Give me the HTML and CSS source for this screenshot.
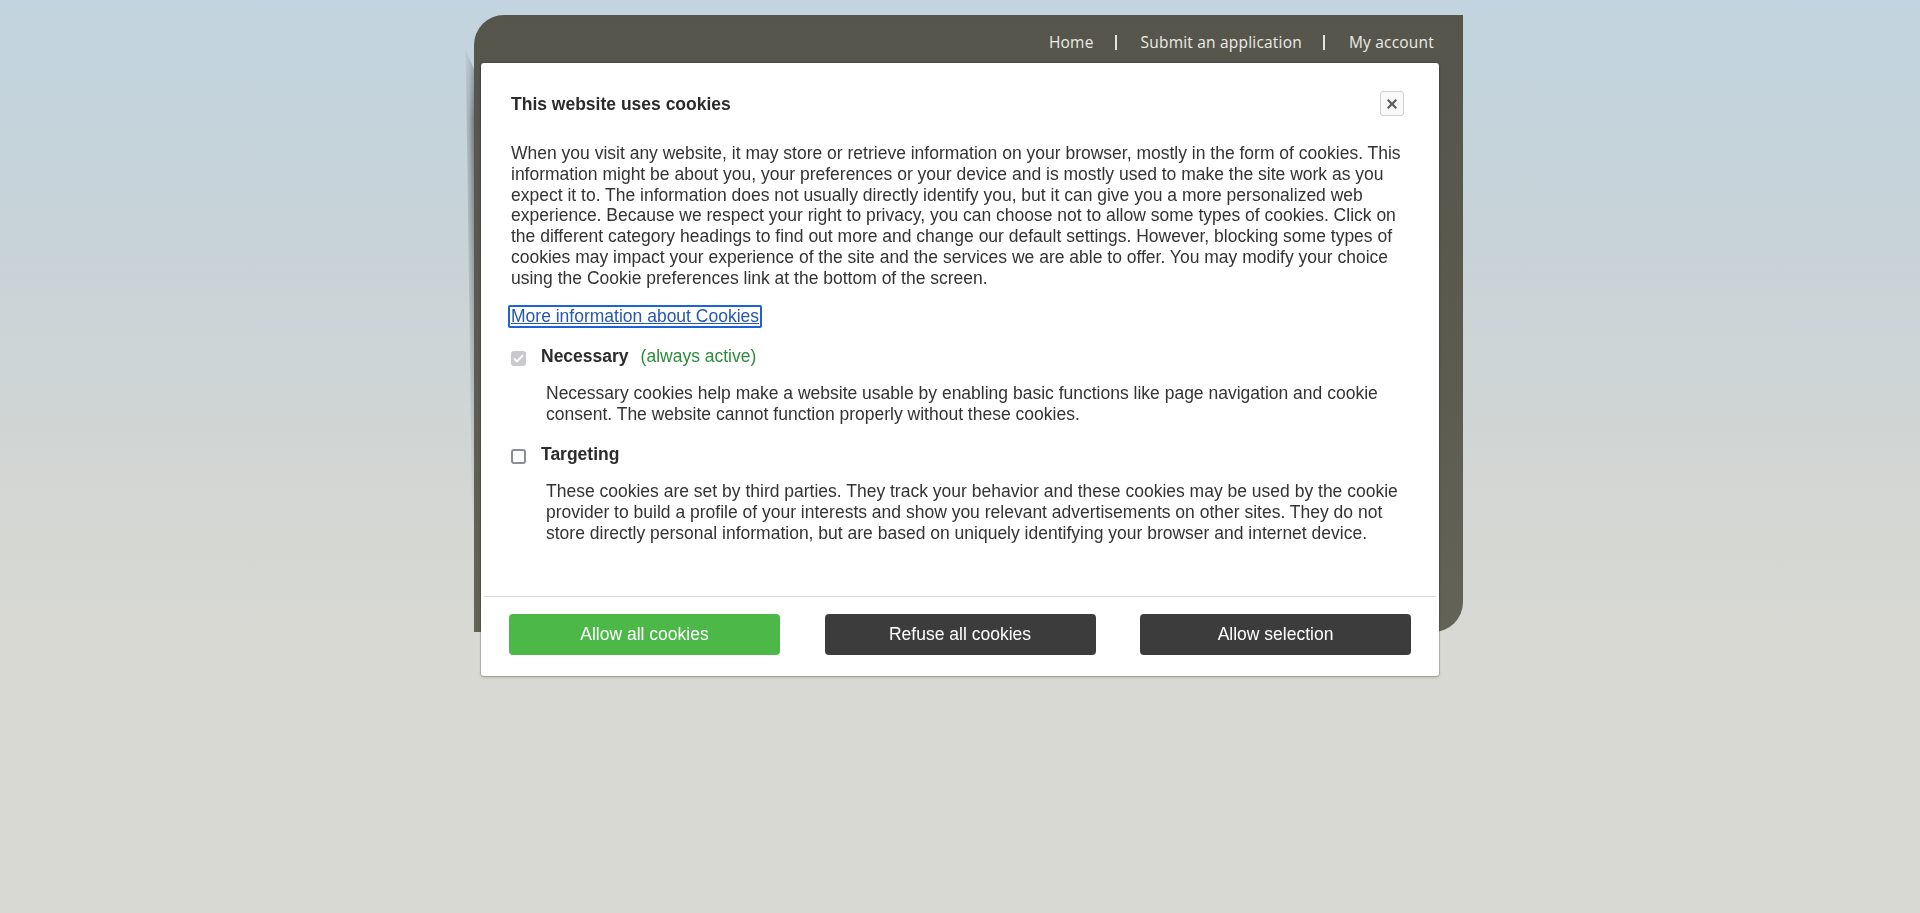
FILE: index.html
```html
<!DOCTYPE html>
<html lang="en">
<head>
<meta charset="utf-8">
<title>Cookies</title>
<link rel="stylesheet" href="styles.css">
</head>
<body>
<div class="page">
  <div class="panel">
    <div class="curl"></div>
    <nav class="topnav">
      <a href="#">Home</a><span class="sep"></span><a href="#">Submit an application</a><span class="sep"></span><a href="#">My account</a>
    </nav>
  </div>
</div>

<div class="modal">
  <div class="modal-body">
    <div class="modal-head">
      <h2 class="title">This website uses cookies</h2>
      <button class="close" type="button" aria-label="Close">
        <svg width="10" height="10" viewBox="0 0 10 10"><path d="M1.6 0 L5 3.4 L8.4 0 L10 1.6 L6.6 5 L10 8.4 L8.4 10 L5 6.6 L1.6 10 L0 8.4 L3.4 5 L0 1.6 Z" fill="#5e5e5e"/></svg>
      </button>
    </div>
    <p class="intro">When you visit any website, it may store or retrieve information on your browser, mostly in the form of cookies. This information might be about you, your preferences or your device and is mostly used to make the site work as you expect it to. The information does not usually directly identify you, but it can give you a more personalized web experience. Because we respect your right to privacy, you can choose not to allow some types of cookies. Click on the different category headings to find out more and change our default settings. However, blocking some types of cookies may impact your experience of the site and the services we are able to offer. You may modify your choice using the Cookie preferences link at the bottom of the screen.</p>
    <a class="more" href="#">More information about Cookies</a>

    <div class="cat cat-first">
      <span class="cb cb-disabled"><svg width="11" height="9" viewBox="0 0 11 9"><path d="M1 4.6 L4 7.4 L10 1.2" fill="none" stroke="#fff" stroke-width="2"/></svg></span>
      <span class="cat-name">Necessary</span>
      <span class="always">(always active)</span>
    </div>
    <p class="cat-desc">Necessary cookies help make a website usable by enabling basic functions like page navigation and cookie consent. The website cannot function properly without these cookies.</p>

    <div class="cat cat-second">
      <span class="cb cb-empty"></span>
      <span class="cat-name">Targeting</span>
    </div>
    <p class="cat-desc">These cookies are set by third parties. They track your behavior and these cookies may be used by the cookie provider to build a profile of your interests and show you relevant advertisements on other sites. They do not store directly personal information, but are based on uniquely identifying your browser and internet device.</p>
  </div>
  <div class="modal-foot">
    <button class="btn btn-green" type="button">Allow all cookies</button>
    <button class="btn btn-dark" type="button">Refuse all cookies</button>
    <button class="btn btn-dark" type="button">Allow selection</button>
  </div>
</div>
</body>
</html>
```

FILE: styles.css
```css
html, body {
  margin: 0;
  padding: 0;
}
body {
  height: 913px;
  overflow: hidden;
  background: linear-gradient(180deg, #c2d4df 0px, #c8d3d8 250px, #d3d6d3 480px, #d8d9d3 640px, #d8d9d3 100%);
  font-family: "Liberation Sans", Arial, sans-serif;
}

.page {
  padding-top: 15px;
  padding-left: 474px;
}

.panel {
  position: relative;
  width: 989px;
  height: 617px;
  background: linear-gradient(180deg, #55554b 0%, #5a5a4f 50%, #636357 100%);
  border-radius: 30px 0 30px 0;
}

.curl {
  position: absolute;
  left: -12px;
  top: 35px;
  width: 12px;
  height: 480px;
  background: linear-gradient(90deg, rgba(120,130,130,0) 0%, rgba(100,108,106,0.35) 60%, rgba(80,86,84,0.7) 100%);
  clip-path: polygon(30% 0, 100% 4%, 100% 100%, 85% 100%, 45% 25%);
  -webkit-mask-image: linear-gradient(180deg, rgba(0,0,0,0.4) 0%, #000 15%, rgba(0,0,0,0.5) 55%, rgba(0,0,0,0) 100%);
  mask-image: linear-gradient(180deg, rgba(0,0,0,0.4) 0%, #000 15%, rgba(0,0,0,0.5) 55%, rgba(0,0,0,0) 100%);
}

.topnav {
  display: flex;
  justify-content: flex-end;
  align-items: center;
  padding: 17px 29px 0 0;
  font-family: "Open Sans", sans-serif;
  font-size: 15.5px;
  line-height: 20px;
  letter-spacing: 0.2px;
}
.topnav a {
  color: #ecece6;
  text-decoration: none;
}
.topnav .sep {
  display: block;
  width: 2px;
  height: 15px;
  background: #e4e4de;
  margin: 0 24px 0 21px;
}

/* modal */
.modal {
  position: fixed;
  top: 63px;
  left: 481px;
  width: 958px;
  background: #fff;
  border-radius: 3px;
  box-shadow: 0 0 0 1px rgba(0,0,0,0.10), 0 1px 3px rgba(0,0,0,0.25);
  color: #333;
  font-size: 17.5px;
  line-height: 21px;
}

.modal-body {
  padding: 31px 26px 52px 27px;
  border-bottom: 1px solid #dcdcdc;
  margin: 0 3px;
}

.modal-head {
  display: flex;
  justify-content: space-between;
  align-items: flex-start;
}
.title {
  margin: 0;
  font-size: 17.5px;
  line-height: 21px;
  font-weight: bold;
  color: #2b2b2b;
}
.close {
  width: 24px;
  height: 25px;
  margin: -3px 6px 0 0;
  padding: 0;
  border: 1px solid #cfcfcf;
  border-radius: 3px;
  background: #fafafa;
  display: flex;
  align-items: center;
  justify-content: center;
  cursor: pointer;
}

.intro {
  margin: 27px 0 0;
  line-height: 20.8px;
}

.more {
  display: block;
  width: fit-content;
  margin: 16px 0 0 -3px;
  padding: 0 1px;
  line-height: 19px;
  border: 2px solid #1b63d6;
  border-radius: 2px;
  color: #2657b2;
  text-decoration: underline;
}

.cat {
  display: flex;
  align-items: flex-start;
}
.cat-first {
  margin-top: 18px;
}
.cat-second {
  margin-top: 19px;
}
.cb {
  box-sizing: border-box;
  width: 15px;
  height: 15px;
  margin-top: 5px;
  margin-right: 15px;
  border-radius: 3px;
  display: flex;
  align-items: center;
  justify-content: center;
  flex: none;
}
.cb-disabled {
  background: #c9c9ce;
}
.cb-empty {
  background: #fff;
  border: 2px solid #8c8c98;
}
.cat-name {
  font-weight: bold;
  color: #2b2b2b;
}
.always {
  margin-left: 12px;
  color: #2c8c3c;
}

.cat-desc {
  margin: 16px 0 0 35px;
}

.modal-foot {
  display: flex;
  justify-content: space-between;
  padding: 17px 28px 21px;
}
.btn {
  width: 271px;
  height: 41px;
  border: none;
  border-radius: 4px;
  color: #fff;
  font-family: "Liberation Sans", Arial, sans-serif;
  font-size: 17.5px;
  cursor: pointer;
}
.btn-green {
  background: #4cb848;
}
.btn-dark {
  background: #3c3c3c;
}
```
